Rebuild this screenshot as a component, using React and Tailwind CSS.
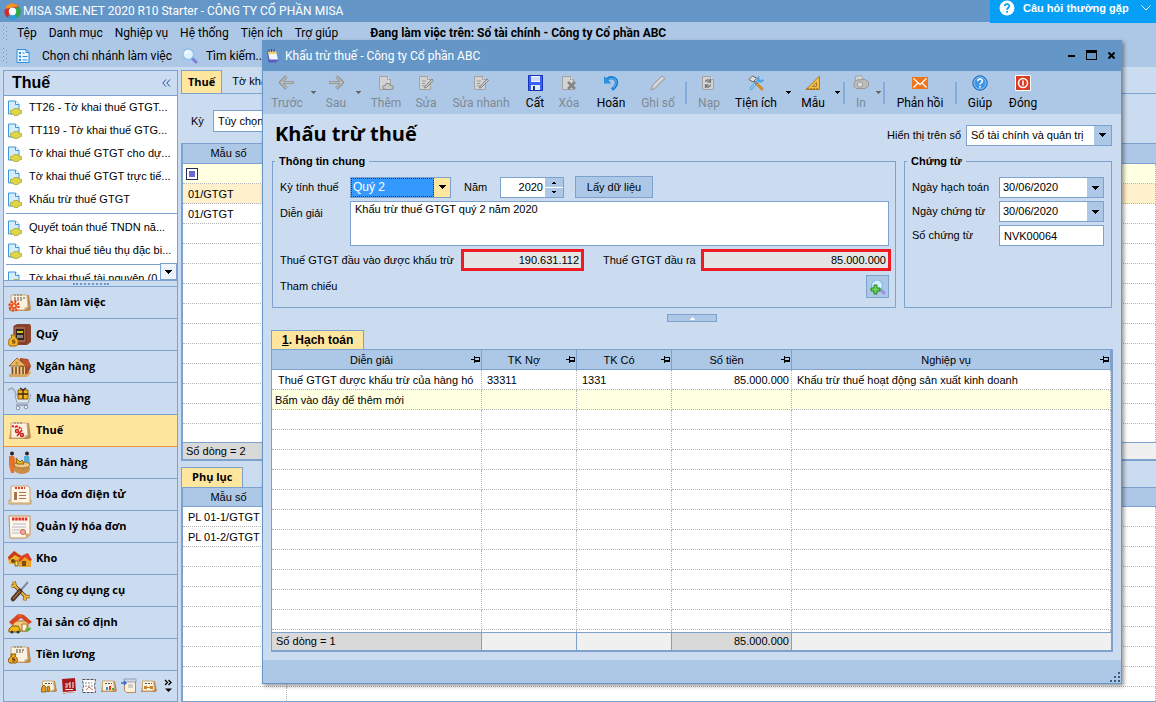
import { useState } from "react";

const UI = "font-['Roboto','Noto_Sans',sans-serif]";
const HEAVY = "font-['Open_Sans','Noto_Sans',sans-serif]";
const SANS = "font-['Liberation_Sans',Arial,sans-serif]";

/* ---------- small shared icons ---------- */

const Caret = ({ className = "" }) => (
  <svg width="7" height="4" viewBox="0 0 7 4" className={className} shapeRendering="crispEdges">
    <path d="M0 0h7L3.5 4z" fill="currentColor" />
  </svg>
);

const SmallCaret = ({ className = "" }) => (
  <svg width="5" height="3" viewBox="0 0 5 3" className={className} shapeRendering="crispEdges">
    <path d="M0 0h5v1H0zM1 1h3v1H1zM2 2h1v1H2z" fill="currentColor" />
  </svg>
);

const Pin = () => (
  <svg width="10" height="7" viewBox="0 0 10 7" shapeRendering="crispEdges">
    <path d="M0 3h3v1H0zM3 0h1v7H3zM4 1h5v1H4zM4 4h5v2H4zM8 1h1v5H8z" fill="#000" />
  </svg>
);

const Logo = () => (
  <svg width="17" height="17" viewBox="0 0 17 17">
    <path d="M8.5 0.5a8 8 0 0 1 7.8 6.3L9 5z" fill="#e8452c" />
    <path d="M8.5 0.5A8 8 0 0 0 1 6l5-1 4-1 4.500-1A8 8 0 0 0 8.500.5z" fill="#f7931e" />
    <path d="M1 6a8 8 0 0 0 3 9L5.500 11 6 5z" fill="#d8281f" />
    <path d="M4 15a8 8 0 0 0 9.500 0L11 11 5.500 10z" fill="#2f9bd8" />
    <path d="M13.500 15a8 8 0 0 0 1-12L11 6v6z" fill="#2fa84c" />
    <circle cx="8.500" cy="8.500" r="3.700" fill="#fff" />
  </svg>
);

const BranchIcon = () => (
  <svg width="14" height="16" viewBox="0 0 14 16">
    <path d="M1 1.500h9l3 3v10H1z" fill="#eaf5ff" stroke="#2e8fdc" />
    <path d="M10 1.500v3h3" fill="none" stroke="#2e8fdc" />
    <path d="M3 4h2v2H3zM3 7.500h2v2H3zM3 11h2v2H3zM6.500 4.500h2v1h-2zM6.500 8h5v1h-5zM6.500 11.500h5v1h-5z" fill="#2e8fdc" />
  </svg>
);

const SearchIcon = () => (
  <svg width="16" height="16" viewBox="0 0 16 16">
    <path d="M9.500 9.500l4.500 4.500" stroke="#7d80d8" strokeWidth="3" strokeLinecap="round" />
    <circle cx="6.300" cy="6.300" r="5.300" fill="#dff3ff" stroke="#8ec2ea" strokeWidth="1.300" />
    <path d="M3.500 6a3 3 0 0 1 3-3" stroke="#fff" strokeWidth="1.500" fill="none" />
  </svg>
);

const NotepadIcon = () => (
  <svg width="13" height="14" viewBox="0 0 13 14">
    <path d="M1 2h8l3.500 9-2.500 2.500H2.500z" fill="#5a5cc4" />
    <path d="M2 2.500h8l2 8H3.500z" fill="#f2f6ff" />
    <path d="M2 2.500h8l.6 2.500H2.500z" fill="#f4d35a" />
    <path d="M3 0v3M5.500 0v3M8 0v3" stroke="#36518f" />
  </svg>
);

const DocIcon = () => (
  <svg width="16" height="16" viewBox="0 0 16 16" className="shrink-0">
    <path d="M1.500 1h7l3.500 3.500V14H1.500z" fill="#d5ecfc" stroke="#3f97dd" />
    <path d="M8.500 1v3.500H12" fill="#fff" stroke="#3f97dd" />
    <path d="M3.500 10.500l2.500-.5 1-1.500h4l1 1.500 2.500.5v3l-2.500.5-1 1.500H7L6 14l-2.500-.5z" fill="#dfd548" stroke="#a79f22" strokeWidth=".7" />
  </svg>
);

/* ---------- dialog toolbar icons ---------- */

const ArrowIcon = ({ flip }) => (
  <svg width="16" height="16" viewBox="0 0 16 16" className={flip ? "-scale-x-100" : ""}>
    <path d="M7.500 1.500L1.500 7.500l6 6M2 7.500h13" fill="none" stroke="#8f8f8f" strokeWidth="3.200" />
    <path d="M7.500 1.800L1.800 7.500l5.700 5.700M2.500 7.500h12" fill="none" stroke="#bdbdbd" strokeWidth="1.400" />
  </svg>
);

const PageIcon = ({ kind }) => (
  <svg width="16" height="16" viewBox="0 0 16 16">
    <path d="M1.500 1.500h8l3 3v10h-11z" fill="#d3d3d3" stroke="#a2a2a2" />
    <path d="M9.500 1.500v3h3" fill="#f3f3f3" stroke="#a2a2a2" />
    {kind === "add" && (
      <path d="M5 11l2.500-.5.500-2h3l1 2 3 .5v3l-3 .5H8L5 13.500z" fill="#c9c9c9" stroke="#8b8b8b" />
    )}
    {kind === "edit" && (
      <>
        <path d="M4 6h4M4 8.500h3M4 11h5" stroke="#999" />
        <path d="M7 11.500l7-7.500 1.500 1.500-7 7-2 .5z" fill="#c4c4c4" stroke="#858585" />
      </>
    )}
    {kind === "delete" && (
      <path d="M7 7l7 7M14 7l-7 7" stroke="#858585" strokeWidth="2.600" />
    )}
    {kind === "reload" && (
      <path d="M4.500 7a2.500 2.500 0 0 1 4.500-1M9.500 4v3h-3M9.500 9.500A2.500 2.500 0 0 1 5 11M4.500 13v-3h3" fill="none" stroke="#777" strokeWidth="1.300" />
    )}
  </svg>
);

const SaveIcon = () => (
  <svg width="15" height="16" viewBox="0 0 15 16">
    <path d="M.5 .500h14v15H.5z" fill="#3763f4" stroke="#1731b4" />
    <path d="M3 1h9v6H3z" fill="#f4f8ff" />
    <path d="M3 3h9M3 5h9" stroke="#a9bdf0" />
    <path d="M3 10h9v5H3z" fill="#e5edff" />
    <path d="M5 11h2v4H5z" fill="#1731b4" />
  </svg>
);

const UndoIcon = () => (
  <svg width="16" height="16" viewBox="0 0 16 16">
    <path d="M4 4.500C8 1 13.500 3 13.500 7.500c0 3-2 5-4.500 7" fill="none" stroke="#1473cd" strokeWidth="3.200" />
    <path d="M4.500 4.500C8.500 1.500 13.200 3.500 13.200 7.500c0 2.500-1.700 4.500-3.700 6" fill="none" stroke="#4bb0f2" strokeWidth="1.200" />
    <path d="M1 1v7.500h7.500z" fill="#2b8fe0" />
  </svg>
);

const PencilIcon = () => (
  <svg width="16" height="16" viewBox="0 0 16 16">
    <path d="M1 15l1-4L12 1l3 2.500L5 13.500z" fill="#c9c9c9" stroke="#999" />
    <path d="M3.500 11.500L13 2" stroke="#eee" />
  </svg>
);

const ToolsIcon = () => (
  <svg width="16" height="16" viewBox="0 0 16 16">
    <path d="M3 13.500L11 5" stroke="#4ba4e0" strokeWidth="2.800" strokeLinecap="round" />
    <path d="M3 13.500L11 5" stroke="#d5efff" strokeWidth="1" strokeLinecap="round" />
    <path d="M10.500 1.500l-.5 4 3 1.200 2.500-2" fill="none" stroke="#4ba4e0" strokeWidth="2" />
    <path d="M9 9l5 5" stroke="#d48a2a" strokeWidth="3" strokeLinecap="round" />
    <path d="M5.500 5.500L9 9" stroke="#777" strokeWidth="1.500" />
    <path d="M1 4.500L4.500 1l4 2-1 1.500L5 7z" fill="#e0e0e0" stroke="#666" />
  </svg>
);

const RulerIcon = () => (
  <svg width="16" height="16" viewBox="0 0 16 16">
    <path d="M1 14.500L14.500 1v13.500z" fill="#f2bd4a" stroke="#b27a19" />
    <path d="M7.500 11.500l4-4v4z" fill="#adc8e6" stroke="#b27a19" />
    <path d="M3 13v1M6 13v1M9 13v1M12 13v1" stroke="#6d4a10" />
  </svg>
);

const PrinterIcon = () => (
  <svg width="16" height="16" viewBox="0 0 16 16">
    <path d="M2 6l.5-4.500 5-1 2 1.500.5 4z" fill="#d5d5d5" stroke="#a0a0a0" />
    <path d="M1 7.500L4 5l8-.5 3.500 2.500v4L12 13.500H3L1 11.500z" fill="#bdbdbd" stroke="#969696" />
    <circle cx="7" cy="9.500" r="2.700" fill="#dcdcdc" stroke="#969696" />
  </svg>
);

const MailIcon = () => (
  <svg width="16" height="16" viewBox="0 0 16 16">
    <path d="M0 2h16v12H0z" fill="#f0741a" />
    <path d="M1.500 3.500L8 9.500l6.500-6M1.500 12.500L6 8M14.500 12.500L10 8" fill="none" stroke="#fff" strokeWidth="1.300" />
  </svg>
);

const HelpIcon = () => (
  <svg width="16" height="16" viewBox="0 0 16 16">
    <circle cx="8" cy="8" r="7.200" fill="#3d95e6" stroke="#1b5fae" />
    <circle cx="8" cy="8" r="6" fill="none" stroke="#9fd0f8" strokeWidth=".8" />
    <path d="M5.800 6.300c0-3 4.600-2.900 4.600-.2C10.400 7.800 8 7.700 8 9.800" fill="none" stroke="#fff" strokeWidth="1.500" />
    <path d="M7.200 11h1.600v1.600H7.200z" fill="#fff" />
  </svg>
);

const PowerIcon = () => (
  <svg width="16" height="16" viewBox="0 0 16 16">
    <path d="M.5 .500h15v15H.5z" fill="#dd3a22" stroke="#fff" />
    <circle cx="8" cy="8" r="4.500" fill="none" stroke="#fff" strokeWidth="1.500" />
    <path d="M8 5.500v5" stroke="#fff" strokeWidth="1.600" />
  </svg>
);

const AddRefIcon = () => (
  <svg width="16" height="16" viewBox="0 0 16 16">
    <path d="M10 10l4 4" stroke="#9a8fdc" strokeWidth="3" strokeLinecap="round" />
    <circle cx="7" cy="6.500" r="5.500" fill="#d4efff" stroke="#7fb8e4" strokeWidth="1.200" />
    <path d="M4 6h3v3h3v3H7v3H4v-3H1V9h3z" fill="#6fd15a" stroke="#1d861d" />
  </svg>
);

/* ---------- sidebar pictures ---------- */

const Calendar = ({ children }) => (
  <>
    <path d="M4 4h17l2 15-3 1H1z" fill="#b98a55" />
    <path d="M3 4h16l1 12-4 3H3z" fill="#fbf1dc" stroke="#c9a878" />
    <path d="M16 19l1-3h3z" fill="#dcb987" />
    <path d="M7 3v2M10 3v2M13 3v2" stroke="#777" />
    {children}
  </>
);

const navPictures = {
  desk: (
    <Calendar>
      <path d="M6 7h11M6 9h8" stroke="#555" strokeDasharray="2 1" />
      <circle cx="6" cy="15" r="4.500" fill="none" stroke="#e8441c" strokeWidth="2.500" strokeDasharray="2 1.500" />
      <circle cx="6" cy="15" r="2.200" fill="#fbd7a0" stroke="#e8441c" strokeWidth="1.500" />
    </Calendar>
  ),
  fund: (
    <>
      <path d="M6 3l3-2h13l1 2v16l-4 3H6z" fill="#8c4630" />
      <path d="M6 3h12v17H6z" fill="#a65f44" stroke="#6e3120" />
      <path d="M8 6h8v11H8z" fill="#2c2520" />
      <path d="M9 8h6v2H9z" fill="#d6c31c" />
      <path d="M9 12h6v3H9z" fill="#888" />
      <path d="M3 12h5l-1 2c4 2 4 8 1 9H2c-3-2-2-7 2-9z" fill="#f1b32a" stroke="#9c6608" />
      <path d="M7 17H4.500v1.500H7V20H4" fill="none" stroke="#7a4a00" />
    </>
  ),
  bank: (
    <>
      <path d="M12 3l8 1 3 7-3 8-9 1z" fill="#a64b28" />
      <path d="M1 11l8-8 9 8z" fill="#eab765" stroke="#a5682a" />
      <path d="M14 4l6 1 3 6-5 1z" fill="#bf5533" />
      <path d="M3 12h14v8H3z" fill="#f1cf8f" />
      <path d="M4.500 12v7M8 12v7M11.500 12v7M15 12v7" stroke="#7a4a22" strokeWidth="1.600" />
      <path d="M1 19h18l4-3v2l-4 4H1z" fill="#d8a560" />
      <circle cx="9" cy="8" r="1.500" fill="#c4961e" />
    </>
  ),
  cart: (
    <>
      <path d="M0 3l4-2 3 3 2 10h12" fill="none" stroke="#99a9b8" strokeWidth="1.500" />
      <path d="M7 8h16l-3 8H9z" fill="#dce5ee" stroke="#93a2b2" />
      <path d="M10 3h10v9H10z" fill="#f3b31c" stroke="#8b5b06" />
      <path d="M15 3v9M10 7h10" stroke="#3a2a10" strokeWidth="1.300" />
      <path d="M12 1l3 2 3-2" fill="none" stroke="#3a2a10" strokeWidth="1.500" />
      <path d="M8 18h12" stroke="#8c9bb0" strokeWidth="1.500" />
      <circle cx="10" cy="21" r="1.800" fill="#eef2f6" stroke="#8090a4" />
      <circle cx="18" cy="20" r="1.800" fill="#eef2f6" stroke="#8090a4" />
    </>
  ),
  tax: (
    <Calendar>
      <path d="M4 7l4 1M8 7l6 3" stroke="#e02020" strokeWidth="2" strokeDasharray="2 1" />
      <circle cx="9" cy="12" r="1.500" fill="none" stroke="#d01818" strokeWidth="1.400" />
      <circle cx="14" cy="16" r="1.500" fill="none" stroke="#d01818" strokeWidth="1.400" />
      <path d="M14 11l-5 6" stroke="#d01818" strokeWidth="1.500" />
    </Calendar>
  ),
  sell: (
    <>
      <circle cx="4" cy="2.500" r="2" fill="#33221a" />
      <path d="M1 5h5l2 8-2 9H3L1 14z" fill="#e5722a" />
      <circle cx="19" cy="2.500" r="2" fill="#33221a" />
      <path d="M16 5h5l1 8h-6z" fill="#58a9d6" />
      <ellipse cx="14" cy="18" rx="8" ry="5" fill="#c98d48" />
      <ellipse cx="14" cy="14" rx="8" ry="3" fill="#efc98a" stroke="#a8712f" />
      <path d="M8 7l4 4 2-2 2 4H9z" fill="#f2c21f" stroke="#8b6508" />
    </>
  ),
  invoice: (
    <>
      <path d="M1 17h22v4H1z" fill="#efd9b3" stroke="#c39b62" />
      <path d="M3 3h17l2 2v15H3z" fill="#fdf6e6" stroke="#caa473" />
      <path d="M7 5h10" stroke="#df3a27" strokeWidth="2" strokeDasharray="2 1" />
      <path d="M6 9h3v8H6zM11 9h7v1h-7zM11 12h7v1h-7zM11 15h7v1h-7z" fill="#a3764f" />
    </>
  ),
  manage: (
    <>
      <path d="M1 1h21v19l-4 3H2z" fill="#fdf8ee" stroke="#c98d48" />
      <path d="M18 23l-1-5 5 1z" fill="#d9a766" />
      <path d="M4 4h16" stroke="#e52c20" strokeWidth="3" strokeDasharray="2.500 .7" />
      <path d="M5 9h13M4 12h14M4 15h9M4 18h8" stroke="#b6b6c4" />
      <circle cx="15" cy="17" r="2.500" fill="#eeb0a4" stroke="#cf5a4a" />
    </>
  ),
  stock: (
    <>
      <path d="M0 10l7-6 7 6v7H1z" fill="#f0b429" />
      <path d="M0 10l6-6 4 3 4 2-2 2-5-3-6 5z" fill="#c83a20" />
      <path d="M11 13l5-5 7 5v7H11z" fill="#eea526" />
      <path d="M10 13l5-5 5-2 4 7-2 1-5-4-5 5z" fill="#dd4125" />
      <circle cx="5" cy="14" r="2" fill="#6b4310" />
      <path d="M14 14h4v5h-4z" fill="#7c4b14" />
      <path d="M7 14h3v5H7z" fill="#fbd964" stroke="#8c5c10" />
    </>
  ),
  tools: (
    <>
      <path d="M7 7l12 12" stroke="#4a3b24" strokeWidth="3.500" />
      <path d="M6 2.500l1 4-3.500 1M16.500 21.500l1-4 4.500 0" fill="none" stroke="#8a5c14" strokeWidth="3.600" />
      <path d="M6 2.500l1 4-3.500 1M16.500 21.500l1-4 4.500 0" fill="none" stroke="#efb335" strokeWidth="2.200" />
      <path d="M7 7l11 11" stroke="#eab23c" strokeWidth="2" />
      <path d="M20 3l-7 8" stroke="#8090a0" strokeWidth="2" />
      <path d="M12 12l-7 8" stroke="#4c3523" strokeWidth="4.500" strokeLinecap="round" />
      <path d="M12 12l-7 8" stroke="#a56d3c" strokeWidth="1.500" />
    </>
  ),
  asset: (
    <>
      <path d="M5 10h15v10H5z" fill="#f2cb83" stroke="#a86e2c" />
      <path d="M1 11l9-8 6 1 8 7-3 2-8-6-9 7z" fill="#d7441f" />
      <path d="M10 3h4v3h-4z" fill="#f0592c" />
      <path d="M14 13h5v7h-5z" fill="#fff3d6" stroke="#a86e2c" />
      <path d="M1 18l3-3h6l2 3v3H1z" fill="#f2b71d" stroke="#805b08" />
      <circle cx="4" cy="21" r="1.500" fill="#333" />
      <circle cx="10" cy="21" r="1.500" fill="#333" />
      <path d="M17 18c2-2 4 0 6-2 0 3-2 5-5 4z" fill="#58b43b" />
    </>
  ),
  salary: (
    <Calendar>
      <path d="M8 7h9M8 9h7" stroke="#444" strokeDasharray="2 1" />
      <path d="M3 11h5l-1 2c3 2 3 6 1 7H2c-3-1-2-5 2-7z" fill="#efaa25" stroke="#8a5806" />
      <path d="M7 15H4.500v1.500H7V18H4" fill="none" stroke="#6f4300" />
    </Calendar>
  ),
};

const NavPicture = ({ name }) => (
  <svg width="24" height="24" viewBox="0 0 24 24" className="shrink-0">
    {navPictures[name]}
  </svg>
);

const MiniCalendar = ({ children }) => (
  <svg width="16" height="16" viewBox="0 0 16 16">
    <path d="M2 3h12l2 10-2 1H0z" fill="#b98a55" />
    <path d="M1.500 3h11l1 8-2 2h-10z" fill="#fbf1dc" stroke="#c9a878" />
    <path d="M4 5.500h7" stroke="#555" strokeDasharray="2 1" />
    {children}
  </svg>
);

const miniIcons = [
  {
    label: "Giá thành",
    icon: (
      <MiniCalendar>
        <path d="M1 9l2-2 2 2v5H0zM6 9l2-1 1 4-2 2z" fill="#e3a01c" stroke="#70480a" strokeWidth=".7" />
      </MiniCalendar>
    ),
  },
  {
    label: "Tổng hợp",
    icon: (
      <svg width="16" height="16" viewBox="0 0 16 16">
        <path d="M1 1l13-1 1 14-13 1.500z" fill="#a8191c" />
        <path d="M2 14.500l13-1" stroke="#eee" />
        <path d="M4 6h2v3H4M9 4v6M7 6h2M12 4v6M4 11.500h8" stroke="#f5dede" strokeWidth="1.200" fill="none" />
      </svg>
    ),
  },
  {
    label: "Báo cáo",
    icon: (
      <svg width="16" height="16" viewBox="0 0 16 16">
        <path d="M1.500 1.500h13l-1 6 1 7h-13l1-7z" fill="#fff" stroke="#555" strokeDasharray="3 1" />
        <path d="M4 5h7M4 8h8" stroke="#888" strokeDasharray="2 1" />
        <path d="M5 12l3-3 4 3" stroke="#df6a5e" fill="none" />
      </svg>
    ),
  },
  {
    label: "Ngân sách",
    icon: (
      <MiniCalendar>
        <path d="M5 9h2v3H5z" fill="#3e8ed0" />
        <path d="M8 8h2v4H8z" fill="#df3c22" />
        <path d="M11 10h2v2h-2z" fill="#43a846" />
      </MiniCalendar>
    ),
  },
  {
    label: "Hợp đồng",
    icon: (
      <svg width="16" height="16" viewBox="0 0 16 16">
        <path d="M3.500 2.500h11v12h-9l-2-2z" fill="#fbf1dc" stroke="#b98a55" />
        <path d="M3 1h12v3H3z" fill="#d3d9e4" stroke="#7c88a0" strokeWidth=".7" />
        <path d="M0 5h5M3 3l2 2-2 2" stroke="#3a63cc" strokeWidth="1.300" fill="none" />
        <path d="M7 7h5M7 9h5" stroke="#aaa" />
      </svg>
    ),
  },
  {
    label: "Cổ đông",
    icon: (
      <MiniCalendar>
        <path d="M3 8h3v3H3zM9 8h3v3H9zM6 9h3v1H6z" fill="#c9852b" />
      </MiniCalendar>
    ),
  },
];

/* ---------- data ---------- */

const menus = ["Tệp", "Danh mục", "Nghiệp vụ", "Hệ thống", "Tiện ích", "Trợ giúp"];

const taxLinks = [
  ["TT26 - Tờ khai thuế GTGT...", "TT119 - Tờ khai thuế GTG...", "Tờ khai thuế GTGT cho dự...", "Tờ khai thuế GTGT trực tiế...", "Khấu trừ thuế GTGT"],
  ["Quyết toán thuế TNDN nă...", "Tờ khai thuế tiêu thụ đặc bi..."],
  ["Tờ khai thuế tài nguyên (0..."],
];

const navItems = [
  { key: "desk", label: "Bàn làm việc" },
  { key: "fund", label: "Quỹ" },
  { key: "bank", label: "Ngân hàng" },
  { key: "cart", label: "Mua hàng" },
  { key: "tax", label: "Thuế" },
  { key: "sell", label: "Bán hàng" },
  { key: "invoice", label: "Hóa đơn điện tử" },
  { key: "manage", label: "Quản lý hóa đơn" },
  { key: "stock", label: "Kho" },
  { key: "tools", label: "Công cụ dụng cụ" },
  { key: "asset", label: "Tài sản cố định" },
  { key: "salary", label: "Tiền lương" },
];

const tools = [
  { label: "Trước", icon: <ArrowIcon />, off: true, w: "w-[44px]" },
  { caret: true, off: true, w: "w-[8px]" },
  { label: "Sau", icon: <ArrowIcon flip />, off: true, w: "w-[38px]" },
  { caret: true, off: true, w: "w-[6px]" },
  { label: "Thêm", icon: <PageIcon kind="add" />, off: true, w: "w-[50px]" },
  { label: "Sửa", icon: <PageIcon kind="edit" />, off: true, w: "w-[30px]" },
  { label: "Sửa nhanh", icon: <PageIcon kind="edit" />, off: true, w: "w-[80px]" },
  { label: "Cất", icon: <SaveIcon />, w: "w-[28px]" },
  { label: "Xóa", icon: <PageIcon kind="delete" />, off: true, w: "w-[40px]" },
  { label: "Hoãn", icon: <UndoIcon />, w: "w-[44px]" },
  { label: "Ghi sổ", icon: <PencilIcon />, off: true, w: "w-[50px]" },
  { sep: true },
  { label: "Nạp", icon: <PageIcon kind="reload" />, off: true, w: "w-[40px]" },
  { label: "Tiện ích", icon: <ToolsIcon />, w: "w-[54px]" },
  { caret: true, w: "w-[10px]" },
  { label: "Mẫu", icon: <RulerIcon />, w: "w-[40px]" },
  { caret: true, w: "w-[8px]" },
  { sep: true },
  { label: "In", icon: <PrinterIcon />, off: true, w: "w-[28px]" },
  { caret: true, off: true, w: "w-[6px]" },
  { sep: true },
  { label: "Phản hồi", icon: <MailIcon />, w: "w-[66px]" },
  { sep: true },
  { label: "Giúp", icon: <HelpIcon />, w: "w-[42px]" },
  { label: "Đóng", icon: <PowerIcon />, w: "w-[44px]" },
];

const entryColumns = [
  { label: "Diễn giải", w: "w-[210px]" },
  { label: "TK Nợ", w: "w-[95px]" },
  { label: "TK Có", w: "w-[95px]" },
  { label: "Số tiền", w: "w-[120px]" },
  { label: "Nghiệp vụ", w: "" },
];

const blankRows = (n) => Array.from({ length: n }, (_, i) => i);

/* ---------- main window ---------- */

const Grip = () => (
  <svg width="5" height="18" viewBox="0 0 5 18" className="shrink-0">
    {[1, 5, 9, 13].map((y) => (
      <path key={y} d={`M0 ${y}h1v1H0zM3 ${y + 2}h1v1H3z`} fill="#7f93ad" />
    ))}
  </svg>
);

function TopBars() {
  return (
    <header className="shrink-0">
      <div className="flex h-[22px] items-center gap-[2px] bg-[#6496c8] px-1 text-white">
        <Logo />
        <h1 className="text-[12px] leading-4">MISA SME.NET 2020 R10 Starter - CÔNG TY CỔ PHẦN MISA</h1>
      </div>
      <nav className="flex h-[22px] items-center bg-[#adc8e6] pl-[3px] text-[12px]">
        <Grip />
        <div className="ml-[9px] flex gap-3">
          {menus.map((m) => (
            <button key={m} className="leading-4">{m}</button>
          ))}
        </div>
        <strong className="ml-8 text-[12px] leading-4">Đang làm việc trên: Sổ tài chính - Công ty Cổ phần ABC</strong>
      </nav>
      <div className="flex h-[23px] items-center bg-[#adc8e6] pl-[3px] text-[12px]">
        <Grip />
        <button className="ml-2 flex items-center gap-3 leading-4">
          <BranchIcon />
          Chọn chi nhánh làm việc
        </button>
        <button className="ml-[10px] flex items-center gap-2 leading-4">
          <SearchIcon />
          Tìm kiếm...
        </button>
      </div>
    </header>
  );
}

function Sidebar() {
  const [active, setActive] = useState("tax");

  return (
    <aside className="flex w-[175px] shrink-0 flex-col border border-[#7da2ce]">
      <div className="flex h-[25px] shrink-0 items-center justify-between border-b border-[#7da2ce] pr-[6px] pl-2">
        <h2 className={`${SANS} text-[16px] leading-5 font-bold`}>Thuế</h2>
        <button aria-label="Thu gọn" className="text-[#27509b]">
          <svg width="9" height="8" viewBox="0 0 9 8">
            <path d="M4 .500L.8 4 4 7.500M8 .500L4.800 4 8 7.500" fill="none" stroke="currentColor" />
          </svg>
        </button>
      </div>

      <div className={`${SANS} relative h-[184px] shrink-0 overflow-hidden bg-white text-[11px]`}>
        {taxLinks.map((group, g) => (
          <ul key={g} className="mb-[2px] ml-[2px] border-b border-[#7da2ce] pb-[2px]">
            {group.map((t) => (
              <li key={t}>
                <a href="#" className="flex h-[23px] items-center gap-[6px] pl-[1px] whitespace-nowrap">
                  <DocIcon />
                  {t}
                </a>
              </li>
            ))}
          </ul>
        ))}
        <button aria-label="Cuộn xuống" className="absolute right-0 bottom-0 flex h-[17px] w-[17px] items-center justify-center border border-[#7da2ce] bg-[#eef4fc]">
          <Caret />
        </button>
      </div>

      <div className="flex h-[7px] shrink-0 items-center justify-center border-y border-[#7da2ce]">
        <div className="w-[36px] border-t-2 border-dotted border-[#6d97cf]" />
      </div>

      <nav>
        {navItems.map((n) => (
          <button
            key={n.key}
            onClick={() => setActive(n.key)}
            className={`${HEAVY} flex h-8 w-full items-center gap-1 border-b pl-1 text-left text-[11px] font-bold ${
              active === n.key ? "border-[#f0943c] bg-[#ffe69f]" : "border-[#7da2ce]"
            }`}
          >
            <NavPicture name={n.key} />
            {n.label}
          </button>
        ))}
      </nav>

      <div className="flex flex-1 items-center justify-end gap-1 pr-1">
        {miniIcons.map((m) => (
          <button key={m.label} aria-label={m.label}>{m.icon}</button>
        ))}
        <button aria-label="Thêm phân hệ" className="ml-[3px]">
          <svg width="9" height="14" viewBox="0 0 9 14">
            <path d="M1 1l2.500 2.500L1 6M4.500 1L7 3.500 4.500 6" fill="none" stroke="#000" strokeWidth="1.300" />
            <path d="M1 9.500h7L4.500 13z" />
          </svg>
        </button>
      </div>
    </aside>
  );
}

const listCell = "h-5 border-r border-b border-dotted border-[#b5b5b5] px-[5px] leading-4 whitespace-nowrap";

function Worklist() {
  return (
    <main className={`${SANS} flex min-w-0 flex-1 flex-col text-[11px]`}>
      <div className="flex h-[24px] shrink-0 border-b border-[#7da2ce]">
        <button className={`${HEAVY} border border-b-0 border-[#7da2ce] bg-[#ffe69f] px-[6px] text-[11px] font-bold`}>Thuế</button>
        <button className="px-[10px] whitespace-nowrap">Tờ khai thuế</button>
      </div>

      <div className="flex h-[49px] shrink-0 items-center pt-[5px] pl-[10px]">
        <label htmlFor="period" className="w-[22px]">Kỳ</label>
        <select id="period" className="h-[22px] w-[120px] appearance-none border border-[#7da2ce] bg-white px-1">
          <option>Tùy chọn</option>
        </select>
      </div>

      <div className="flex h-[299px] shrink-0 flex-col overflow-hidden border-l-2 border-[#7da2ce] bg-white">
        <table className="w-full table-fixed border-separate border-spacing-0">
          <thead>
            <tr className="bg-[#adc8e6]">
              <th className="h-[21px] w-[104px] border-y border-r border-[#7da2ce] pr-4 font-normal">
                <span className="pl-1">Mẫu số</span>
              </th>
              <th className="border-y border-[#7da2ce]" />
            </tr>
          </thead>
          <tbody>
            <tr className="bg-[#ffffe1]">
              <td className={`${listCell} pl-[3px]`}>
                <svg width="12" height="12" viewBox="0 0 12 12" shapeRendering="crispEdges">
                  <path d="M.5 .500h11v11H.5z" fill="#fff" stroke="#27275f" />
                  <path d="M3 3h6v6H3z" fill="#6a6ad6" />
                </svg>
              </td>
              <td className={listCell} />
            </tr>
            <tr className="bg-[#fff1cb]">
              <td className={listCell}>01/GTGT</td>
              <td className={listCell} />
            </tr>
            <tr>
              <td className={listCell}>01/GTGT</td>
              <td className={listCell} />
            </tr>
            {blankRows(12).map((i) => (
              <tr key={i}>
                <td className={listCell} />
                <td className={listCell} />
              </tr>
            ))}
          </tbody>
        </table>
      </div>
      <div className="flex h-[19px] shrink-0 border-t border-b-2 border-l-2 border-[#7da2ce] bg-[#f0f0f0]">
        <div className="w-[104px] border-r border-[#7da2ce] bg-[#d9d9d9] px-[3px] leading-4 whitespace-nowrap">Số dòng = 2</div>
      </div>

      <div className="mt-[6px] flex h-[20px] shrink-0">
        <button className={`${HEAVY} border border-b-0 border-[#7da2ce] bg-[#ffe69f] px-[10px] text-[11px] font-bold`}>Phụ lục</button>
      </div>
      <div className="min-h-0 flex-1 overflow-hidden border-b border-l-2 border-[#7da2ce] bg-white">
        <table className="w-full table-fixed border-separate border-spacing-0">
          <thead>
            <tr className="bg-[#adc8e6]">
              <th className="h-5 w-[104px] border-y border-r border-[#7da2ce] pr-4 font-normal">
                <span className="pl-1">Mẫu số</span>
              </th>
              <th className="border-y border-[#7da2ce]" />
            </tr>
          </thead>
          <tbody>
            {["PL 01-1/GTGT", "PL 01-2/GTGT"].map((t) => (
              <tr key={t}>
                <td className={listCell}>{t}</td>
                <td className={listCell} />
              </tr>
            ))}
            {blankRows(12).map((i) => (
              <tr key={i}>
                <td className={listCell} />
                <td className={listCell} />
              </tr>
            ))}
          </tbody>
        </table>
      </div>
    </main>
  );
}

/* ---------- dialog ---------- */

function Toolbar() {
  return (
    <div className="flex h-[43px] shrink-0 items-center bg-[#adc8e6] pt-[1px] pl-[2px]">
      {tools.map((t, i) => {
        if (t.sep) return <span key={i} className="mx-[2px] h-[22px] w-[2px] shrink-0 bg-[#83abdb]" />;
        if (t.caret) {
          return (
            <button key={i} aria-label="Mở danh sách" className={`flex h-[22px] shrink-0 items-end justify-center pb-[10px] ${t.w} ${t.off ? "text-[#666]" : ""}`}>
              <SmallCaret className="shrink-0" />
            </button>
          );
        }
        return (
          <button key={i} className={`flex shrink-0 flex-col items-center gap-1 text-[12px] leading-4 whitespace-nowrap ${t.w} ${t.off ? "text-[#7f8893]" : ""}`}>
            {t.icon}
            {t.label}
          </button>
        );
      })}
    </div>
  );
}

const fieldBox = "flex border border-[#7da2ce] bg-white";

function DateField({ id, label }) {
  const [value, setValue] = useState("30/06/2020");
  return (
    <div className="flex h-[21px] items-center">
      <label htmlFor={id} className="flex-1">{label}</label>
      <div className={`${fieldBox} h-[21px] w-[105px]`}>
        <input id={id} value={value} onChange={(e) => setValue(e.target.value)} className="min-w-0 flex-1 px-[3px]" />
        <button aria-label="Chọn ngày" className="flex w-4 items-center justify-center bg-[#adc8e6]">
          <Caret />
        </button>
      </div>
    </div>
  );
}

function GeneralInfo() {
  const [year, setYear] = useState(2020);

  return (
    <fieldset className="min-w-0 flex-1 border border-[#7da2ce] pr-[6px] pb-[9px] pl-[7px]">
      <legend className="ml-[-5px] px-1 leading-[14px] font-bold">Thông tin chung</legend>

      <div className="mt-2 flex h-[22px] items-center">
        <label htmlFor="taxPeriod" className="w-[70px] shrink-0">Kỳ tính thuế</label>
        <div className="relative h-[21px] w-[101px] border border-[#7da2ce]">
          <select id="taxPeriod" className="h-full w-[83px] appearance-none border border-dotted border-[#123a6b] bg-[#3399ff] px-[1px] text-[12px] leading-4 text-white">
            <option>Quý 2</option>
            <option>Quý 1</option>
            <option>Quý 3</option>
            <option>Quý 4</option>
          </select>
          <span className="pointer-events-none absolute inset-y-0 right-0 flex w-4 items-center justify-center bg-[#ffe69f]">
            <Caret />
          </span>
        </div>
        <label htmlFor="year" className="ml-[13px] w-9">Năm</label>
        <div className={`${fieldBox} h-[21px] w-[64px]`}>
          <input id="year" value={year} onChange={(e) => setYear(Number(e.target.value) || 0)} className="min-w-0 flex-1 px-[2px] text-right" />
          <div className="flex w-[18px] flex-col bg-[#adc8e6]">
            <button aria-label="Tăng" onClick={() => setYear(year + 1)} className="flex flex-1 items-center justify-center border-b border-white">
              <SmallCaret className="w-[4px] rotate-180" />
            </button>
            <button aria-label="Giảm" onClick={() => setYear(year - 1)} className="flex flex-1 items-center justify-center">
              <SmallCaret className="w-[4px]" />
            </button>
          </div>
        </div>
        <button className="ml-[11px] h-[22px] w-[78px] border border-[#7da2ce] bg-[#adc8e6]">Lấy dữ liệu</button>
      </div>

      <div className="mt-[3px] flex h-[45px]">
        <label htmlFor="note" className="w-[70px] shrink-0 pt-1">Diễn giải</label>
        <textarea id="note" defaultValue="Khấu trừ thuế GTGT quý 2 năm 2020" className="min-w-0 flex-1 resize-none border border-[#7da2ce] bg-white px-1 leading-[14px]" />
      </div>

      <div className="mt-[3px] -mr-[2px] flex h-[22px] items-center">
        <label htmlFor="vatIn" className="w-[181px] shrink-0">Thuế GTGT đầu vào được khấu trừ</label>
        <input id="vatIn" readOnly value="190.631.112" className="h-[22px] w-[123px] border-3 border-[#ed1c24] bg-[#e5e5e5] px-[2px] text-right" />
        <label htmlFor="vatOut" className="ml-[19px] w-[98px] shrink-0">Thuế GTGT đầu ra</label>
        <input id="vatOut" readOnly value="85.000.000" className="h-[22px] min-w-0 flex-1 border-3 border-[#ed1c24] bg-[#e5e5e5] px-[2px] text-right" />
      </div>

      <div className="mt-1 flex h-[23px] items-center justify-between">
        <span>Tham chiếu</span>
        <button aria-label="Thêm tham chiếu" className="flex h-[23px] w-[23px] items-center justify-center border border-[#7da2ce] bg-[#adc8e6]">
          <AddRefIcon />
        </button>
      </div>
    </fieldset>
  );
}

function Voucher() {
  return (
    <fieldset className="w-[208px] shrink-0 border border-[#7da2ce] px-[7px]">
      <legend className="ml-[-5px] px-1 leading-[14px] font-bold">Chứng từ</legend>
      <div className="mt-[9px] flex flex-col gap-[3px]">
        <DateField id="postDate" label="Ngày hạch toán" />
        <DateField id="docDate" label="Ngày chứng từ" />
        <div className="flex h-[21px] items-center">
          <label htmlFor="docNo" className="flex-1">Số chứng từ</label>
          <input id="docNo" defaultValue="NVK00064" className="h-[21px] w-[105px] border border-[#7da2ce] bg-white px-1" />
        </div>
      </div>
    </fieldset>
  );
}

const entryCell = "h-5 border-r border-b border-dotted border-[#b5b5b5] px-[5px] leading-4 whitespace-nowrap overflow-hidden";

function Entries() {
  return (
    <div className="flex min-h-0 flex-1 flex-col border-r-2 border-b-2 border-l border-[#7da2ce] bg-white">
      <div className="min-h-0 flex-1 overflow-hidden">
        <table className="w-full table-fixed border-separate border-spacing-0">
          <thead>
            <tr className="bg-[#adc8e6]">
              {entryColumns.map((c) => (
                <th key={c.label} className={`h-[21px] border-y border-r border-[#7da2ce] px-0 font-normal ${c.w}`}>
                  <div className="flex items-center">
                    <span className="flex-1 leading-4">{c.label}</span>
                    <Pin />
                  </div>
                </th>
              ))}
            </tr>
          </thead>
          <tbody>
            <tr>
              <td className={`${entryCell} pl-[6px]`}>Thuế GTGT được khấu trừ của hàng hó</td>
              <td className={entryCell}>33311</td>
              <td className={entryCell}>1331</td>
              <td className={`${entryCell} pr-[2px] text-right`}>85.000.000</td>
              <td className={entryCell}>Khấu trừ thuế hoạt động sản xuất kinh doanh</td>
            </tr>
            <tr className="bg-[#ffffe1]">
              <td className={`${entryCell} pl-[3px]`}>Bấm vào đây để thêm mới</td>
              <td className={entryCell} />
              <td className={entryCell} />
              <td className={entryCell} />
              <td className={entryCell} />
            </tr>
            {blankRows(12).map((i) => (
              <tr key={i}>
                {entryColumns.map((c) => (
                  <td key={c.label} className={entryCell} />
                ))}
              </tr>
            ))}
          </tbody>
        </table>
      </div>
      <div className="flex h-[18px] shrink-0 border-t border-[#7da2ce] bg-[#f0f0f0] leading-[17px]">
        <div className="w-[210px] border-r border-[#7da2ce] bg-[#d9d9d9] px-[4px]">Số dòng = 1</div>
        <div className="w-[95px] border-r border-[#7da2ce]" />
        <div className="w-[95px] border-r border-[#7da2ce]" />
        <div className="w-[120px] border-r border-[#7da2ce] bg-[#d9d9d9] px-[2px] text-right">85.000.000</div>
      </div>
    </div>
  );
}

function TaxDialog() {
  return (
    <section
      role="dialog"
      aria-label="Khấu trừ thuế"
      className={`${UI} absolute top-10 right-[34px] bottom-[18px] left-[262px] flex flex-col border border-[#6496c8] bg-[#ccdcf0] shadow-[2px_2px_4px_rgba(0,0,0,0.4)]`}
    >
      <div className="flex h-[30px] shrink-0 items-center bg-[#6496c8] pr-[6px] pl-[3px] text-white">
        <NotepadIcon />
        <h2 className="ml-[6px] flex-1 text-[12px] leading-4">Khấu trừ thuế - Công ty Cổ phần ABC</h2>
        <div className="flex items-center gap-[11px] pb-[2px] text-black">
          <button aria-label="Thu nhỏ">
            <svg width="7" height="9" viewBox="0 0 7 9"><path d="M0 4h7v2H0z" /></svg>
          </button>
          <button aria-label="Phóng to">
            <svg width="11" height="10" viewBox="0 0 11 10" shapeRendering="crispEdges">
              <path d="M0 0h11v10H0zM1 3v6h9V3z" fillRule="evenodd" />
            </svg>
          </button>
          <button aria-label="Đóng cửa sổ">
            <svg width="7" height="7" viewBox="0 0 7 7"><path d="M.5 .500l6 6M6.500 .500l-6 6" stroke="#000" strokeWidth="2" /></svg>
          </button>
        </div>
      </div>

      <Toolbar />

      <div className={`${SANS} flex min-h-0 flex-1 flex-col px-2 pb-2 text-[11px]`}>
        <div className="flex h-10 shrink-0 items-center justify-between pr-[1px] pl-1">
          <h3 className={`${HEAVY} text-[20px] leading-7 font-bold`}>Khấu trừ thuế</h3>
          <div className="mt-[2px] flex items-center gap-[5px]">
            <label htmlFor="ledger">Hiển thị trên sổ</label>
            <div className="relative h-[21px] w-[146px] border border-[#7da2ce]">
              <select id="ledger" className="h-full w-full appearance-none bg-white px-1">
                <option>Sổ tài chính và quản trị</option>
                <option>Sổ tài chính</option>
                <option>Sổ quản trị</option>
              </select>
              <span className="pointer-events-none absolute inset-y-0 right-0 flex w-[17px] items-center justify-center bg-[#adc8e6]">
                <Caret />
              </span>
            </div>
          </div>
        </div>

        <div className="flex shrink-0 gap-2 px-[1px]">
          <GeneralInfo />
          <Voucher />
        </div>

        <button aria-label="Ẩn thông tin chung" className="mt-[6px] flex h-2 w-[50px] shrink-0 items-center justify-center self-center border border-[#7da2ce] bg-[#adc8e6] text-white">
          <SmallCaret className="rotate-180" />
        </button>

        <div className="mt-2 flex h-[19px] shrink-0">
          <button className="border border-b-0 border-[#7da2ce] bg-[#ffe69f] px-[10px] text-[12px] font-bold">
            <u>1</u>. Hạch toán
          </button>
        </div>
        <Entries />
      </div>

      <div className="flex h-[23px] shrink-0 items-end justify-end bg-[#adc8e6] p-[1px]">
        <svg width="10" height="10" viewBox="0 0 10 10" shapeRendering="crispEdges">
          <path d="M8 0h2v2H8zM4 4h2v2H4zM8 4h2v2H8zM0 8h2v2H0zM4 8h2v2H4zM8 8h2v2H8z" fill="#3d5a85" />
        </svg>
      </div>
    </section>
  );
}

export default function App() {
  return (
    <div className={`${UI} relative flex h-screen min-h-[702px] w-full flex-col overflow-hidden bg-[#ccdcf0] text-black`}>
      <TopBars />

      <div className="flex min-h-0 flex-1 gap-[3px] pt-[3px] pl-[3px]">
        <Sidebar />
        <Worklist />
      </div>

      <button className={`${SANS} absolute top-0 right-0 flex h-[23px] w-[166px] items-center bg-[#05a0f5] pb-[7px] pl-[9px] text-[11px] font-bold text-white`}>
        <svg width="16" height="16" viewBox="0 0 16 16" className="shrink-0">
          <circle cx="8" cy="8" r="7.500" fill="#fff" />
          <path d="M5.700 6.300c0-3 4.600-2.900 4.600-.2C10.300 7.800 8 7.700 8 9.800" fill="none" stroke="#05a0f5" strokeWidth="1.700" />
          <path d="M7.100 11h1.800v1.800H7.100z" fill="#05a0f5" />
        </svg>
        <span className="ml-2 flex-1 text-left whitespace-nowrap">Câu hỏi thường gặp</span>
        <svg width="10" height="6" viewBox="0 0 10 6" className="mr-[5px]">
          <path d="M.5 .500L5 5 9.500 .500" fill="none" stroke="#fff" />
        </svg>
      </button>

      <TaxDialog />
    </div>
  );
}
